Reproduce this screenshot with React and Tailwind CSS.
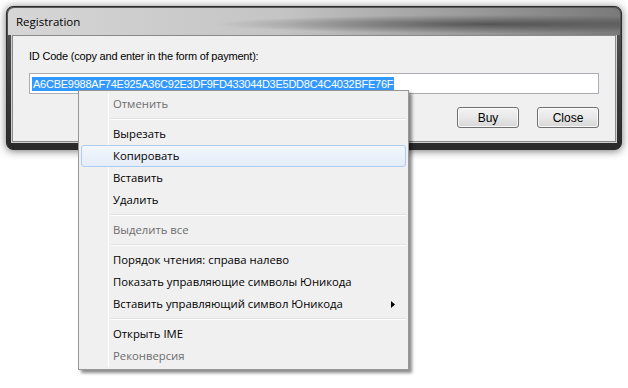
const ui = { fontFamily: '"Segoe UI", "Open Sans", "Noto Sans", sans-serif' };
const sys = { fontFamily: '"Liberation Sans", Arial, sans-serif' };

const items = [
  { label: "Отменить", disabled: true },
  { sep: true },
  { label: "Вырезать" },
  { label: "Копировать", active: true },
  { label: "Вставить" },
  { label: "Удалить" },
  { sep: true },
  { label: "Выделить все", disabled: true },
  { sep: true },
  { label: "Порядок чтения: справа налево" },
  { label: "Показать управляющие символы Юникода" },
  { label: "Вставить управляющий символ Юникода", sub: true },
  { sep: true },
  { label: "Открыть IME" },
  { label: "Реконверсия", disabled: true },
];

const ContextMenu = () => (
  <div className="absolute left-[78px] top-[90px] w-[331px] bg-[#f0f0f0] border border-[#979797] py-[2px] px-[2px] shadow-[3px_3px_3px_rgba(0,0,0,0.45)] text-[11.3px]">
    <div className="absolute left-[29px] top-[2px] bottom-[2px] w-px bg-[#e2e3e3] border-r border-white" />
    {items.map((it, i) =>
      it.sep ? (
        <div key={i} className="h-[8px] flex items-center pl-[30px]">
          <div className="w-full h-[2px] border-t border-[#e0e0e0] border-b-white border-b" />
        </div>
      ) : (
        <div
          key={i}
          className={
            "relative h-[22px] flex items-center pl-[31px] pr-[10px] rounded-[3px] border " +
            (it.active
              ? "border-[#aeccf0] bg-gradient-to-b from-[#f2f6fc] to-[#e4edf9]"
              : "border-transparent") +
            (it.disabled ? " text-[#6d6d6d]" : " text-black")
          }
        >
          <span className="flex-1">{it.label}</span>
          {it.sub && (
            <svg width="4" height="7" viewBox="0 0 4 7">
              <path d="M0 0 L4 3.5 L0 7 Z" fill="#000" />
            </svg>
          )}
        </div>
      )
    )}
  </div>
);

const Btn = ({ children }) => (
  <button
    className="w-[62px] h-[21px] rounded-[3px] border border-[#707070] bg-gradient-to-b from-[#f3f3f3] via-[#e8e8e8] to-[#d6d6d6] shadow-[inset_0_0_0_1px_rgba(255,255,255,0.8)] text-[12px] text-black leading-none"
    style={sys}
  >
    {children}
  </button>
);

export default function App() {
  return (
    <div className="relative w-[628px] h-[388px] bg-white overflow-hidden" style={ui}>
      <div className="pt-[6px] pl-[6px]">
        <div className="w-[616px] h-[144px] rounded-[7px] border border-[#2b2b2b] bg-gradient-to-b from-[#5a5a5a] via-[#3e3e3e] to-[#2a2a2a] shadow-[0_1px_8px_rgba(0,0,0,0.55)] p-[1px] flex flex-col">
          <div className="h-[27px] rounded-t-[6px] bg-gradient-to-r from-[#d6d6d6] via-[#c4c4c4] via-45% to-[#7a7a7a] flex items-center pl-[8px] pr-[6px] text-[11.5px] text-black relative">
            <div className="absolute inset-0 rounded-t-[6px] bg-[radial-gradient(ellipse_at_78%_60%,rgba(30,30,30,0.55),transparent_40%)]" />
            <span className="relative">Registration</span>
          </div>
          <div className="flex-1 px-[4px] pb-[6px] flex">
            <div className="flex-1 bg-[#f0f0f0] border border-[#8a8a8a] shadow-[0_0_0_1px_#d0d0d0] pl-[16px] pr-[16px] pt-[13px] text-[12px] text-black">
              <div className="h-[15px] leading-[15px] text-[11px] tracking-[-0.2px]" style={sys}>
                ID Code (copy and enter in the form of payment):
              </div>
              <div className="mt-[9px] h-[21px] bg-white border border-[#abadb3] flex items-center px-[2px]">
                <span
                  className="bg-[#3399ff] text-white text-[11px] leading-[14px] px-px tracking-[-0.25px]"
                  style={sys}
                >
                  A6CBE9988AF74E925A36C92E3DF9FD433044D3E5DD8C4C4032BFE76F
                </span>
              </div>
              <div className="mt-[13px] flex justify-end gap-[18px]">
                <Btn>Buy</Btn>
                <Btn>Close</Btn>
              </div>
            </div>
          </div>
        </div>
      </div>
      <ContextMenu />
    </div>
  );
}
